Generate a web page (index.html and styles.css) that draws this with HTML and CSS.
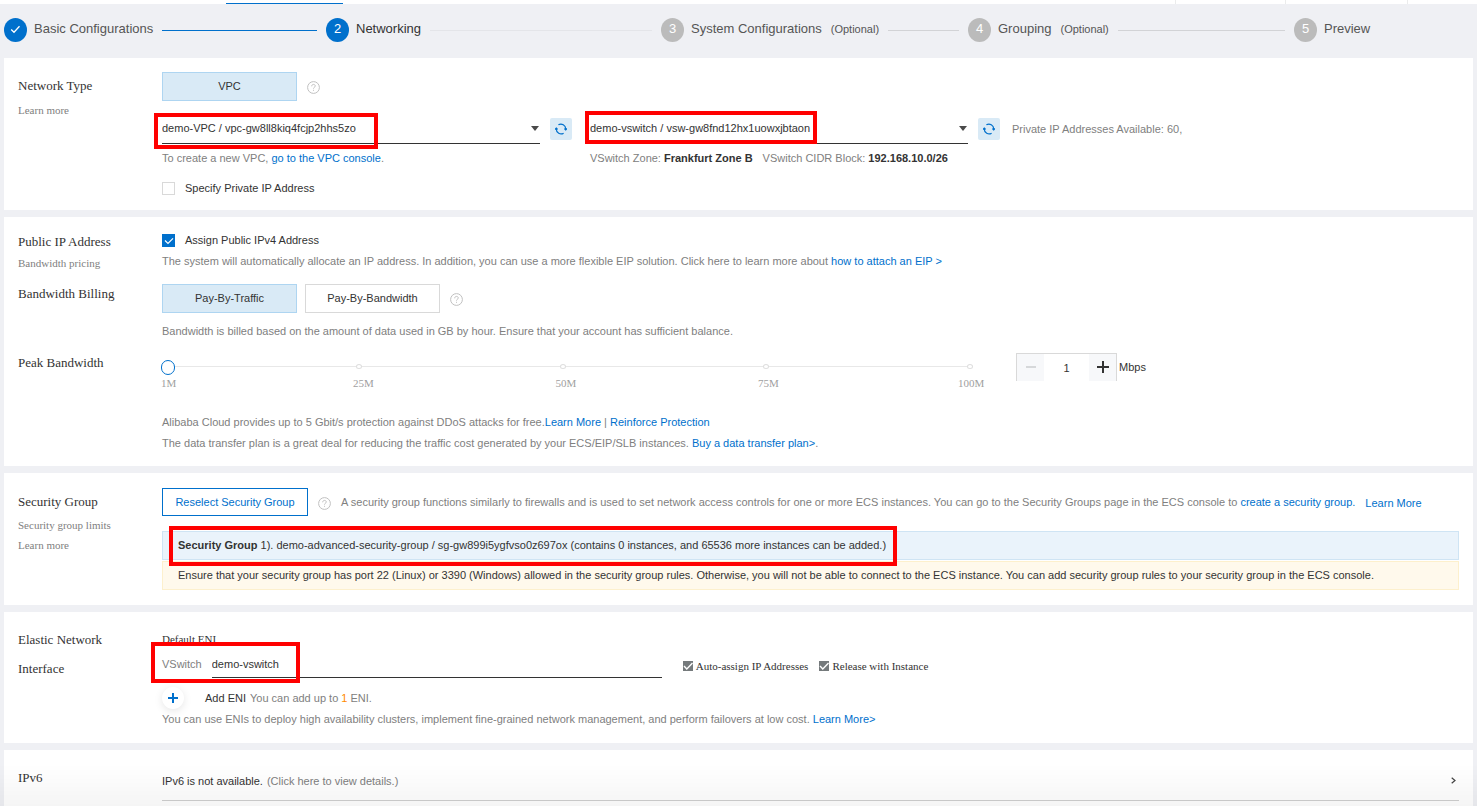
FILE: index.html
```html
<!DOCTYPE html>
<html lang="en">
<head>
<meta charset="utf-8">
<title>Networking</title>
<link rel="stylesheet" href="styles.css">
</head>
<body>
<svg class="defs" aria-hidden="true">
  <symbol id="help" viewBox="0 0 13 13"><circle cx="6.5" cy="6.5" r="5.9" fill="none" stroke="#c0c0c0"/><path d="M4.7 5.3c0-1.2.8-1.9 1.8-1.9s1.8.7 1.8 1.6c0 1.2-1.8 1.3-1.8 2.6M6.5 8.8v1" fill="none" stroke="#c0c0c0"/></symbol>
  <symbol id="refresh" viewBox="0 0 12 12"><path d="M3.4 1.8A4.8 4.8 0 0 1 10.7 6M8.6 10.2A4.8 4.8 0 0 1 1.3 6" fill="none" stroke="#0070cc" stroke-width="1.2"/><path d="M9.3 5.3H12v1.3l-1.3 1.2-1.4-1.2zM2.7 6.7H0V5.4l1.3-1.2 1.4 1.2z" fill="#0070cc"/></symbol>
  <symbol id="caret" viewBox="0 0 8 5"><path d="M0 0h8L4 5z" fill="#4a4a4a"/></symbol>
</svg>

<div class="tabs"><span class="tab-active"></span><span class="tab-group"><i></i><i></i><i></i></span></div>

<ol class="steps">
  <li class="done"><span class="dot"><svg width="11" height="9" viewBox="0 0 11 9"><path d="M1.2 4.5 4 7.2 9.5 1.3" fill="none" stroke="#fff" stroke-width="1.3"/></svg></span><span>Basic Configurations</span><hr></li>
  <li class="current"><span class="dot">2</span><span>Networking</span><hr></li>
  <li><span class="dot">3</span><span>System Configurations</span><small>(Optional)</small><hr></li>
  <li><span class="dot">4</span><span>Grouping</span><small>(Optional)</small><hr></li>
  <li><span class="dot">5</span><span>Preview</span></li>
</ol>

<main>
  <section class="card">
    <div class="row">
      <div class="label label-network"><h2>Network Type</h2><a href="#">Learn more</a></div>
      <div>
        <div class="line"><button class="choice selected" type="button">VPC</button><svg class="help"><use href="#help"/></svg></div>
        <div class="networks">
          <div class="network">
            <div class="line">
              <div class="select"><select aria-label="VPC"><option>demo-VPC / vpc-gw8ll8kiq4fcjp2hhs5zo</option></select><svg class="caret"><use href="#caret"/></svg><span class="mark mark-vpc"></span></div>
              <button class="refresh" type="button" aria-label="Refresh VPCs"><svg><use href="#refresh"/></svg></button>
            </div>
            <p class="note">To create a new VPC, <a href="#">go to the VPC console</a>.</p>
          </div>
          <div class="network">
            <div class="line">
              <div class="select"><select aria-label="VSwitch"><option>demo-vswitch / vsw-gw8fnd12hx1uowxjbtaon</option></select><svg class="caret"><use href="#caret"/></svg><span class="mark mark-vsw"></span></div>
              <button class="refresh" type="button" aria-label="Refresh VSwitches"><svg><use href="#refresh"/></svg></button>
            </div>
            <p class="note zones"><span>VSwitch Zone: <b>Frankfurt Zone B</b></span><span>VSwitch CIDR Block: <b>192.168.10.0/26</b></span></p>
          </div>
          <p class="available">Private IP Addresses Available: 60,</p>
        </div>
        <label class="check check-private"><input type="checkbox">Specify Private IP Address</label>
      </div>
    </div>
  </section>

  <section class="card card-public">
    <div class="row">
      <div class="label label-public"><h2>Public IP Address</h2><a href="#">Bandwidth pricing</a></div>
      <div>
        <label class="check"><input type="checkbox" checked>Assign Public IPv4 Address</label>
        <p class="note">The system will automatically allocate an IP address. In addition, you can use a more flexible EIP solution. Click here to learn more about <a href="#">how to attach an EIP &gt;</a></p>
      </div>
    </div>
    <div class="row">
      <div class="label"><h2>Bandwidth Billing</h2></div>
      <div>
        <div class="line"><button class="choice selected" type="button">Pay-By-Traffic</button><button class="choice second" type="button">Pay-By-Bandwidth</button><svg class="help"><use href="#help"/></svg></div>
        <p class="note billing-note">Bandwidth is billed based on the amount of data used in GB by hour. Ensure that your account has sufficient balance.</p>
      </div>
    </div>
    <div class="row">
      <div class="label"><h2><label for="peak">Peak Bandwidth</label></h2></div>
      <div>
        <div class="bandwidth">
          <div class="slider">
            <input id="peak" type="range" min="1" max="100" value="1">
            <div class="ticks"><i></i><i></i><i></i><i></i></div>
            <div class="scale"><span>1M</span><div><span>25M</span><span>50M</span><span>75M</span><span>100M</span></div></div>
          </div>
          <div class="stepper">
            <button type="button" disabled aria-label="Decrease"><svg width="12" height="12"><path d="M1 6h10" stroke="#d6d8da" stroke-width="2"/></svg></button>
            <input type="text" value="1" aria-label="Peak bandwidth in Mbps">
            <button type="button" aria-label="Increase"><svg width="12" height="12"><path d="M0 6h12M6 0v12" stroke="#333" stroke-width="2"/></svg></button>
          </div>
          <span class="unit">Mbps</span>
        </div>
        <p class="note">Alibaba Cloud provides up to 5 Gbit/s protection against DDoS attacks for free.<a href="#">Learn More</a> | <a href="#">Reinforce Protection</a></p>
        <p class="note">The data transfer plan is a great deal for reducing the traffic cost generated by your ECS/EIP/SLB instances. <a href="#">Buy a data transfer plan&gt;</a>.</p>
      </div>
    </div>
  </section>

  <section class="card card-security">
    <div class="row">
      <div class="label label-security"><h2>Security Group</h2><a href="#">Security group limits</a><a href="#">Learn more</a></div>
      <div>
        <div class="line"><button class="outline" type="button">Reselect Security Group</button><svg class="help"><use href="#help"/></svg>
          <p class="note group-note">A security group functions similarly to firewalls and is used to set network access controls for one or more ECS instances. You can go to the Security Groups page in the ECS console to <a href="#">create a security group.</a></p><a class="more" href="#">Learn More</a></div>
        <div class="banner info"><b>Security Group</b> 1). demo-advanced-security-group / sg-gw899i5ygfvso0z697ox (contains 0 instances, and 65536 more instances can be added.)<span class="mark mark-group"></span></div>
        <div class="banner warning">Ensure that your security group has port 22 (Linux) or 3390 (Windows) allowed in the security group rules. Otherwise, you will not be able to connect to the ECS instance. You can add security group rules to your security group in the ECS console.</div>
      </div>
    </div>
  </section>

  <section class="card card-eni">
    <div class="row">
      <div class="label"><h2>Elastic Network Interface</h2></div>
      <div class="eni">
        <h3>Default ENI</h3>
        <div class="eni-field">
          <label for="eni-vswitch">VSwitch</label>
          <input id="eni-vswitch" class="eni-input" type="text" value="demo-vswitch">
          <span class="mark mark-eni"></span>
          <label class="fixed"><input type="checkbox" checked disabled>Auto-assign IP Addresses</label>
          <label class="fixed"><input type="checkbox" checked disabled>Release with Instance</label>
        </div>
        <div class="add"><button type="button" aria-label="Add ENI"><svg width="10" height="10"><path d="M0 5h10M5 0v10" stroke="#0070cc" stroke-width="2"/></svg></button><span>Add ENI</span><p class="note">You can add up to <em>1</em> ENI.</p></div>
        <p class="note">You can use ENIs to deploy high availability clusters, implement fine-grained network management, and perform failovers at low cost. <a href="#">Learn More&gt;</a></p>
      </div>
    </div>
  </section>

  <section class="card card-ipv6">
    <div class="row">
      <div class="label label-ipv6"><h2>IPv6</h2></div>
      <button class="expand" type="button"><span>IPv6 is not available.</span><small>(Click here to view details.)</small><svg width="5" height="7" viewBox="0 0 5 7"><path d="M.7.7 4 3.5.7 6.3" fill="none" stroke="#444" stroke-width="1.2"/></svg></button>
    </div>
  </section>
</main>
<div class="fade"></div>
</body>
</html>
```
FILE: styles.css
```css
* { box-sizing: border-box; }
body {
  margin: 0;
  min-height: 100vh;
  display: flex;
  flex-direction: column;
  background: #eff0f4;
  color: #333;
  font: 11px/20px "Liberation Sans", Arial, sans-serif;
}
h2, h3, p, ol { margin: 0; padding: 0; font-weight: normal; }
a { color: #0070cc; text-decoration: none; }
button, input, select { font: inherit; color: inherit; margin: 0; padding: 0; border-radius: 0; }
button { cursor: pointer; }
svg { flex: none; display: block; }
.defs { position: absolute; width: 0; height: 0; }

.tabs { display: flex; height: 4px; background: #fff; align-items: flex-end; justify-content: space-between; padding-left: 226px; }
.tab-active { width: 117px; height: 1px; background: #0070cc; }
.tab-group { display: grid; grid-template-columns: 110px 122px 70px; height: 4px; }
.tab-group i { border-left: 1px solid #ebecec; }

.steps {
  display: grid;
  grid-template-columns: 322fr 335fr 307fr 326fr 183fr;
  height: 54px;
  padding: 12px 0 18px 4px;
  list-style: none;
  font-size: 13px;
}
.steps li { display: flex; align-items: center; color: #555; white-space: nowrap; padding-bottom: 2px; }
.steps small { font-size: 11px; margin-left: 9px; }
.steps hr { flex: 1; height: 1px; margin: 3px 9px 0; border: 0; background: #d2d3d6; }
.steps .dot {
  width: 23px; height: 24px; margin: 2px 7px 0 0;
  display: flex; flex: none; align-items: center; justify-content: center;
  border-radius: 50%; background: #bbb; color: #fff; line-height: 22px; padding-bottom: 2px;
}
.steps .done .dot, .steps .current .dot { background: #0070cc; }
.steps .done hr { background: #0070cc; }
.steps .current { color: #333; }
.steps .current hr { background: #e4e5e9; }

main { flex: 1; display: flex; flex-direction: column; gap: 7px; padding: 0 4px; }
.card { background: #fff; padding: 14px 14px 12px; display: flex; flex-direction: column; gap: 11px; }
.row { display: grid; grid-template-columns: 144px minmax(0, 1fr); }
.label { display: flex; flex-direction: column; padding-right: 20px; font-family: "Liberation Serif", "Times New Roman", serif; }
.label h2 { font-size: 13px; }
.label a { color: #808080; }
.label-network { padding-top: 4px; gap: 4px; }
.label-public { padding-top: 1px; gap: 1px; }
.label-security { padding-top: 4px; }
.label-security h2 { margin-bottom: 3px; }
.label-ipv6 { padding-top: 5px; }

.line { display: flex; align-items: center; }
.note { color: #808080; line-height: 21px; }
.note b { color: #333; }
.help { width: 13px; height: 13px; margin: 2px 0 0 10px; }
.choice { width: 135px; height: 29px; padding-bottom: 1px; background: #fff; border: 1px solid #d9d9d9; }
.choice.selected { background: #d9eaf6; border-color: #aed5f1; }
.choice.second { margin-left: 8px; }

.networks { display: flex; margin-top: 13px; }
.network { flex: 0 1 410px; margin-right: 18px; }
.network + .network { margin-right: 12px; }
.network .line { gap: 10px; margin-bottom: 4px; }
.select { position: relative; flex: 1; min-width: 0; }
.select select { display: block; width: 100%; height: 30px; padding-bottom: 2px; appearance: none; background: none; border: 0; border-bottom: 1px solid #333; }
.caret { position: absolute; right: 1px; top: 12px; width: 8px; height: 5px; pointer-events: none; }
.refresh { display: flex; align-items: center; justify-content: center; width: 22px; height: 22px; border: 0; border-radius: 2px; background: #d9eaf6; }
.refresh svg { width: 12px; height: 12px; }
.zones { display: flex; gap: 10px; white-space: nowrap; }
.available { color: #808080; line-height: 30px; }

.check { display: flex; align-items: center; gap: 10px; height: 18px; margin-bottom: 2px; }
.check input {
  appearance: none; width: 13px; height: 13px; background: #fff; border: 1px solid #d9d9d9;
}
.check input:checked {
  border: 0;
  background: #0070cc url("data:image/svg+xml,%3Csvg xmlns='http://www.w3.org/2000/svg' viewBox='0 0 13 13'%3E%3Cpath d='M3 6.5l3 3 5-5.2' fill='none' stroke='white' stroke-width='1.2'/%3E%3C/svg%3E");
}
.check-private { margin: 10px 0 1px; }

.billing-note { margin-top: 8px; }
.bandwidth { display: flex; margin-bottom: 20px; }
.slider { position: relative; flex: 0 1 808px; margin-right: 46px; padding-top: 6px; }
.slider input { appearance: none; display: block; width: 100%; height: 16px; background: linear-gradient(#e8e8e8, #e8e8e8) 0 7px / 100% 1px no-repeat; }
.slider input::-webkit-slider-thumb { appearance: none; width: 14px; height: 15px; margin: 1px 0 0 -1px; background: #fff; border: 1px solid #0070cc; border-radius: 7px; }
.ticks { position: absolute; left: 24%; right: -3px; top: 11px; display: flex; justify-content: space-between; pointer-events: none; }
.ticks i { width: 6px; height: 5px; background: #fff; border: 1px solid #dedede; border-radius: 50%; }
.scale { display: flex; line-height: 17px; margin: 0 -14px 0 -1px; color: #a0a0a0; font-family: "Liberation Serif", "Times New Roman", serif; }
.scale > span { flex: 0 0 23%; }
.scale div { flex: 1; display: flex; justify-content: space-between; }
.scale div span { width: 26px; text-align: center; }
.stepper { display: flex; height: 28px; border: 1px solid #d9d9d9; border-bottom: 0; }
.stepper button { display: flex; align-items: center; justify-content: center; width: 27px; padding-bottom: 2px; border: 0; background: #f7f8fa; }
.stepper input { width: 45px; border: 0; text-align: center; }
.unit { margin-left: 2px; line-height: 28px; }

.card-security { padding: 15px 14px; }
.outline { width: 146px; height: 28px; flex: none; background: #fff; border: 1px solid #0070cc; color: #0070cc; }
.group-note { margin-left: 10px; }
.more { margin: 2px 0 0 10px; white-space: nowrap; }
.banner { min-height: 29px; margin-top: 1px; padding: 0 15px; line-height: 27px; border: 1px solid; }
.banner.info { position: relative; z-index: 1; margin-top: 15px; background: #eaf3fb; border-color: #cfe4f4; }
.banner.warning { background: #fff9ec; border-color: #fdf0cd; }

.card-eni { padding-top: 13px; padding-bottom: 13px; }
.card-eni h2 { line-height: 29px; }
.eni { padding-top: 3px; }
.eni h3 { font: 11px/22px "Liberation Serif", "Times New Roman", serif; }
.eni-field { position: relative; display: flex; align-items: center; height: 28px; color: #808080; }
.eni-input { flex: 0 1 450px; height: 28px; margin: 0 21px 0 10px; border: 0; border-bottom: 1px solid #333; color: #333; }
.fixed { display: flex; align-items: center; gap: 3px; margin: 4px 11px 0 0; color: #333; font-family: "Liberation Serif", "Times New Roman", serif; }
.fixed input {
  appearance: none; width: 10px; height: 10px;
  background: #757a7c url("data:image/svg+xml,%3Csvg xmlns='http://www.w3.org/2000/svg' viewBox='0 0 10 10'%3E%3Cpath d='M1 5l2.8 3L9.5 2' fill='none' stroke='white' stroke-width='1.4'/%3E%3C/svg%3E");
}
.add { display: flex; align-items: center; margin-top: 9px; }
.add button { display: flex; align-items: center; justify-content: center; width: 22px; height: 22px; margin-right: 21px; border: 0; border-radius: 50%; background: #fff; box-shadow: 0 2px 8px rgba(0, 0, 0, .1); }
.add .note { margin-left: 4px; }
.add em { font-style: normal; color: #ff8a00; }

.card-ipv6 { flex: 1; padding-top: 13px; padding-bottom: 0; }
.expand { display: flex; align-items: center; gap: 4px; height: 38px; padding-bottom: 2px; background: none; border: 0; border-bottom: 1px solid #d0d0d0; text-align: left; }
.expand small { font-size: 11px; color: #808080; }
.expand svg { margin: 0 3px 0 auto; }

.mark { position: absolute; border: 4px solid #f00; pointer-events: none; }
.mark-vpc { left: -8px; top: -1px; width: 224px; height: 36px; }
.mark-vsw { left: -5px; top: -3px; width: 232px; height: 33px; }
.mark-group { left: 6px; top: -6px; width: 728px; height: 40px; }
.mark-eni { left: -11px; top: -8px; width: 149px; height: 41px; }

.fade { position: fixed; left: 0; right: 0; bottom: 0; height: 42px; background: linear-gradient(transparent, rgba(0, 0, 0, .04)); pointer-events: none; }
```
